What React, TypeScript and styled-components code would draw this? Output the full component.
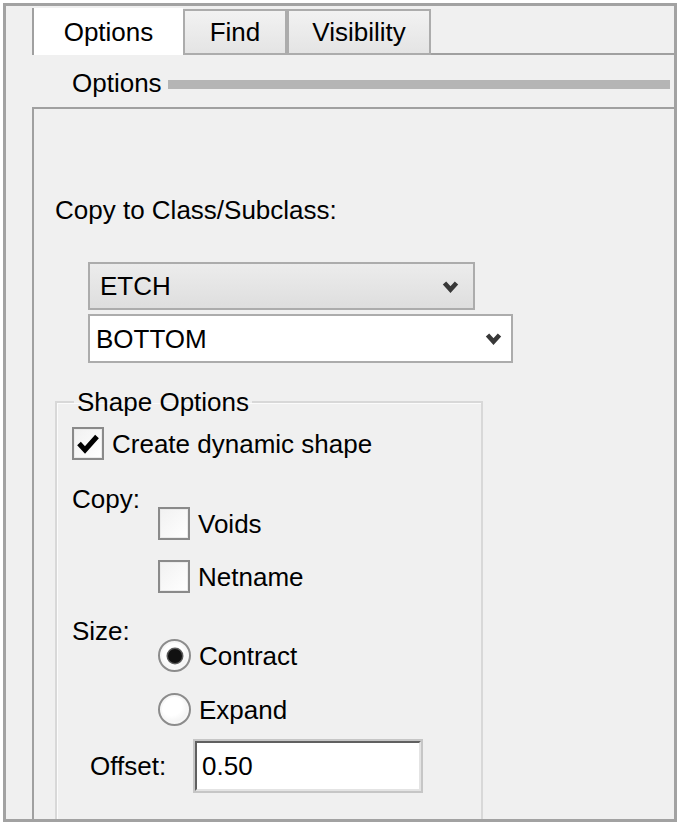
import React from 'react';
import styled, { createGlobalStyle } from 'styled-components';

const Global = createGlobalStyle`
  html, body { margin: 0; padding: 0; background: #ffffff; }
  body {
    font-family: "Liberation Sans", Arial, sans-serif;
    font-size: 26px;
    color: #000;
  }
`;

const Frame = styled.div`
  margin: 3px 0 0 3px;
  width: 674px;
  height: 819px;
  box-sizing: border-box;
  border: 3px solid #a2a2a2;
  background: #f0f0f0;
  overflow: hidden;
  display: flex;
  flex-direction: column;
  padding-left: 26px;
`;

const TabStrip = styled.div`
  display: flex;
  align-items: flex-end;
  height: 47px;
  margin-top: 2px;
  flex: none;
`;

const Tab = styled.div<{ $active?: boolean; $w: number }>`
  box-sizing: border-box;
  width: ${(p) => p.$w}px;
  height: ${(p) => (p.$active ? 47 : 46)}px;
  display: flex;
  align-items: center;
  justify-content: center;
  line-height: 30px;
  background: ${(p) => (p.$active ? '#ffffff' : 'linear-gradient(#f2f2f2, #e4e4e4)')};
  border: ${(p) => (p.$active ? 'none' : '2px solid #acacac')};
  border-left: 2px solid ${(p) => (p.$active ? '#a0a0a0' : '#acacac')};
`;

const TabFiller = styled.div`
  flex: 1;
  align-self: stretch;
  border-bottom: 2px solid #a0a0a0;
`;

const SectionHeader = styled.div`
  display: flex;
  align-items: center;
  gap: 6px;
  height: 30px;
  margin-top: 13px;
  padding-left: 40px;
  padding-right: 4px;
  line-height: 30px;
  flex: none;
`;

const HeaderBar = styled.div`
  flex: 1;
  height: 9px;
  margin-top: 3px;
  background: #b5b5b5;
`;

const Page = styled.div`
  flex: 1;
  margin-top: 9px;
  border-top: 2px solid #a0a0a0;
  border-left: 2px solid #a0a0a0;
  padding-left: 21px;
  display: flex;
  flex-direction: column;
  align-items: flex-start;
`;

const Label = styled.div<{ $top?: number; $w?: number; $left?: number }>`
  line-height: 30px;
  height: 30px;
  white-space: nowrap;
  margin-top: ${(p) => p.$top ?? 0}px;
  margin-left: ${(p) => p.$left ?? 0}px;
  width: ${(p) => (p.$w ? `${p.$w}px` : 'auto')};
  flex: none;
`;

const Combo = styled.div<{ $editable?: boolean; $w: number; $h: number; $top: number; $padL: number; $padR: number }>`
  box-sizing: border-box;
  width: ${(p) => p.$w}px;
  height: ${(p) => p.$h}px;
  margin-top: ${(p) => p.$top}px;
  margin-left: 33px;
  padding: 0 ${(p) => p.$padR}px 0 ${(p) => p.$padL}px;
  display: flex;
  align-items: center;
  justify-content: space-between;
  border: 2px solid #acacac;
  background: ${(p) => (p.$editable ? '#ffffff' : 'linear-gradient(#ececec, #dedede)')};
  line-height: 30px;
`;

const Chevron = () => (
  <svg width="17" height="13" viewBox="0 0 17 13">
    <polyline points="2.5,3 8.5,9.5 14.5,3" fill="none" stroke="#383838" strokeWidth="4.6" />
  </svg>
);

const Group = styled.fieldset`
  box-sizing: border-box;
  width: 428px;
  margin: 24px 0 0 0;
  padding: 0 0 80px 15px;
  border: 2px solid #d8d8d8;
  box-shadow: inset 1px 1px 0 #fbfbfb;
  min-width: 0;
`;

const Legend = styled.legend`
  padding: 0 3px;
  margin-left: 2px;
  line-height: 30px;
  height: 30px;
`;

const Row = styled.div<{ $top: number; $h: number; $gap?: number }>`
  display: flex;
  align-items: center;
  gap: ${(p) => p.$gap ?? 8}px;
  height: ${(p) => p.$h}px;
  margin-top: ${(p) => p.$top}px;
  line-height: 30px;
  white-space: nowrap;
`;

const OptionGroup = styled.div<{ $top: number }>`
  display: flex;
  align-items: flex-start;
  margin-top: ${(p) => p.$top}px;
`;

const OptionColumn = styled.div<{ $gap: number }>`
  display: flex;
  flex-direction: column;
  gap: ${(p) => p.$gap}px;
  margin-top: 23px;
`;

const Box = styled.span`
  box-sizing: border-box;
  width: 32px;
  height: 33px;
  flex: none;
  border: 2px solid #8a8a8a;
  background: linear-gradient(135deg, #f1f1f1, #ffffff);
  box-shadow: inset 0 0 0 1px #ebebeb;
  display: flex;
  align-items: center;
  justify-content: center;
`;

const RadioCircle = styled.span`
  box-sizing: border-box;
  width: 33px;
  height: 33px;
  flex: none;
  border-radius: 50%;
  border: 2px solid #8c8c8c;
  background: radial-gradient(circle at 40% 35%, #ffffff 40%, #e6e6e6 100%);
  box-shadow: inset 0 0 0 2px #f7f7f7;
  display: flex;
  align-items: center;
  justify-content: center;
`;

const RadioDot = styled.span`
  width: 14px;
  height: 14px;
  border-radius: 50%;
  background: #111;
  box-shadow: 0 0 0 1.5px #5a5a5a;
`;

const TextInput = styled.div`
  box-sizing: border-box;
  width: 226px;
  height: 50px;
  padding-left: 5px;
  display: flex;
  align-items: center;
  background: #ffffff;
  border: 2px solid;
  border-color: #606060 #e4e4e4 #e4e4e4 #606060;
  box-shadow: 0 0 0 2px #c6c6c6;
  line-height: 30px;
`;

const Check = ({ checked }: { checked?: boolean }) => (
  <Box>
    {checked && (
      <svg width="24" height="24" viewBox="0 0 24 24">
        <polyline points="3,11.5 9,18 21,4.5" fill="none" stroke="#000" strokeWidth="5" />
      </svg>
    )}
  </Box>
);

const Radio = ({ checked }: { checked?: boolean }) => <RadioCircle>{checked && <RadioDot />}</RadioCircle>;

export default function App() {
  return (
    <>
      <Global />
      <Frame>
        <TabStrip>
          <Tab $active $w={151}>Options</Tab>
          <Tab $w={104}>Find</Tab>
          <Tab $w={144}>Visibility</Tab>
          <TabFiller />
        </TabStrip>
        <SectionHeader>
          <span>Options</span>
          <HeaderBar />
        </SectionHeader>
        <Page>
          <Label $top={86}>Copy to Class/Subclass:</Label>
          <Combo $w={387} $h={48} $top={37} $padL={10} $padR={14}>
            <span>ETCH</span>
            <Chevron />
          </Combo>
          <Combo $editable $w={425} $h={49} $top={4} $padL={6} $padR={9}>
            <span>BOTTOM</span>
            <Chevron />
          </Combo>
          <Group>
            <Legend>Shape Options</Legend>
            <Row $top={10} $h={33} $gap={8}>
              <Check checked />
              <span>Create dynamic shape</span>
            </Row>
            <OptionGroup $top={24}>
              <Label $w={86}>Copy:</Label>
              <OptionColumn $gap={20}>
                <Row $top={0} $h={33}>
                  <Check />
                  <span>Voids</span>
                </Row>
                <Row $top={0} $h={33}>
                  <Check />
                  <span>Netname</span>
                </Row>
              </OptionColumn>
            </OptionGroup>
            <OptionGroup $top={23}>
              <Label $w={86}>Size:</Label>
              <OptionColumn $gap={21}>
                <Row $top={0} $h={33}>
                  <Radio checked />
                  <span>Contract</span>
                </Row>
                <Row $top={0} $h={33}>
                  <Radio />
                  <span>Expand</span>
                </Row>
              </OptionColumn>
            </OptionGroup>
            <Row $top={13} $h={54} $gap={0}>
              <Label $w={105} $left={18}>Offset:</Label>
              <TextInput>0.50</TextInput>
            </Row>
          </Group>
        </Page>
      </Frame>
    </>
  );
}
